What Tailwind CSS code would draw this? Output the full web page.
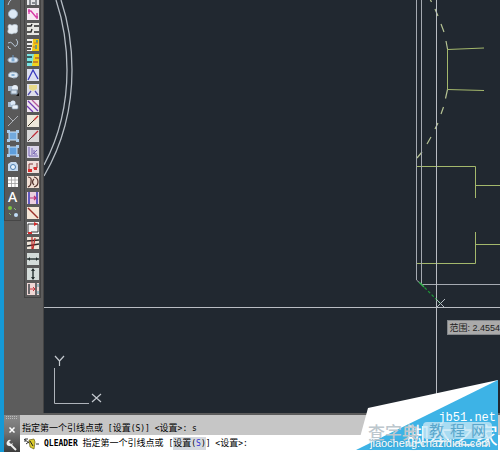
<!DOCTYPE html>
<html lang="zh-CN">
<head>
<meta charset="utf-8">
<title>CAD</title>
<script src="https://cdn.jsdelivr.net/npm/@tailwindcss/browser@4"></script>
</head>
<body class="bg-[#5c5c5c] font-['Noto_Sans','Noto_Sans_CJK_SC',sans-serif]">
<main class="relative flex h-screen flex-col overflow-hidden border-l-4 border-[#1599d6]">
  <div class="flex min-h-0 flex-1">
    <aside class="flex w-10 shrink-0 items-start gap-[3px] border-r border-[#444] bg-[#5c5c5c]">
      <nav aria-label="绘图" class="-mt-[9px] grid h-[230px] w-[17px] shrink-0 auto-rows-fr justify-items-center items-center border-x border-b border-[#464646] bg-[#595959]">
        <button aria-label="圆弧"><svg class="size-3" viewBox="0 0 12 12"><path d="M1 12Q3 5 8 6" fill="none" stroke="#b9c7d8"/></svg></button>
        <button aria-label="圆"><svg class="size-3" viewBox="0 0 12 12"><circle cx="6" cy="6" r="4.5" fill="#dde9f5" stroke="#a4b5c8"/></svg></button>
        <button aria-label="修订云线"><svg class="size-3" viewBox="0 0 12 12"><path d="M3 1.500Q5 3 7 1.500Q11 1 10.500 4Q10 6 10.500 8Q10 11 7 10Q5 11.500 3 10.500Q0 10 1 7.500Q2 6 1 4Q1 1 3 1.500" fill="#e6edf3" stroke="#bac8d6" stroke-width=".7"/></svg></button>
        <button aria-label="样条曲线"><svg class="size-3" viewBox="0 0 12 12"><path d="M1 5Q4 3 6 6Q8 10 10 7Q12 4 9 1M1 8Q1 11 4 11" fill="none" stroke="#b7c7d7"/></svg></button>
        <button aria-label="椭圆"><svg class="size-3" viewBox="0 0 12 12"><ellipse cx="6" cy="6" rx="5" ry="2.500" fill="#dce8f3" stroke="#9aabc0"/><path d="M6 1v6" stroke="#6d9cc8"/><path d="M4.500 4.500h3v3h-3z" fill="#7eaad2"/></svg></button>
        <button aria-label="椭圆弧"><svg class="size-3" viewBox="0 0 12 12"><path d="M2 8Q0 4 5 3Q11 3 11 6Q11 9 6 9" fill="#dce8f3" stroke="#9bafc2"/><path d="M4.500 5h3v2h-3z" fill="#86afd2"/></svg></button>
        <button aria-label="插入块"><svg class="size-3" viewBox="0 0 12 12"><path d="M1 2h6v5H1z" fill="#aebfd1"/><circle cx="8" cy="4" r="3" fill="#e8f0f8"/><path d="M4 6h6v4H4z" fill="#d3dfeb" stroke="#8396aa"/><path d="M9 12h3V9z" fill="#111"/></svg></button>
        <button aria-label="创建块"><svg class="size-3" viewBox="0 0 12 12"><path d="M1 3h7v5H1z" fill="#a9bdd2"/><circle cx="6" cy="4" r="2.5" fill="#dce9f7"/><rect x="5" y="6" width="6" height="4" rx="1" fill="#eaf1f8" stroke="#889db4" stroke-width=".7"/></svg></button>
        <button aria-label="点"><svg class="size-3" viewBox="0 0 12 12"><path d="M1 1l5 5M1 11L11 1" fill="none" stroke="#aeb2b8"/></svg></button>
        <button aria-label="图案填充"><svg class="size-3" viewBox="0 0 12 12"><path d="M2 2h8v8H2z" fill="#72a9dc" stroke="#d4e8fa"/><path d="M0 0h3v3H0zM9 0h3v3H9zM0 9h3v3H0zM9 9h3v3H9z" fill="#a9ccec"/></svg></button>
        <button aria-label="渐变色"><svg class="size-3" viewBox="0 0 12 12"><path d="M2 2h8v8H2z" fill="#5f9fdc" stroke="#c4e0fa"/><path d="M0 0h3v3H0zM9 0h3v3H9zM0 9h3v3H0zM9 9h3v3H9z" fill="#a9ccec"/></svg></button>
        <button aria-label="面域"><svg class="size-3" viewBox="0 0 12 12"><path d="M1 3l3-2h5l2 3v6H1z" fill="#c6daee"/><circle cx="6" cy="6" r="2.5" fill="#e8f3fc" stroke="#4b7faf"/></svg></button>
        <button aria-label="表格"><svg class="size-3" viewBox="0 0 12 12"><path d="M1 1h10v10H1z" fill="#fff"/><path d="M1 4h10M1 7.500h10M4.500 1v10M8 1v10" stroke="#9c9c9c" stroke-width=".8"/></svg></button>
        <button aria-label="多行文字" class="text-[14px] leading-3 font-medium text-white">A</button>
        <button aria-label="添加选定对象"><svg class="size-3" viewBox="0 0 12 12"><circle cx="3" cy="2" r="2" fill="#7ec440"/><circle cx="9" cy="9" r="2" fill="#c3def8"/><path d="M7 2l2 2M2 7l2 2" stroke="#8db879"/></svg></button>
      </nav>
      <nav aria-label="工具" class="-mt-[9px] grid h-[307px] w-[17px] shrink-0 auto-rows-fr justify-items-center items-center border-x border-b border-[#444] bg-[#595959]">
        <button aria-label="工具 1"><svg class="size-3" viewBox="0 0 12 12"><path fill="#e5e6e8" d="M0 0h12v12H0z"/><path d="M3 3v9M9 3v9M5 10h3" stroke="#6b7177" stroke-width="1.500"/></svg></button>
        <button aria-label="工具 2"><svg class="size-3" viewBox="0 0 12 12"><path fill="#f6e9f3" d="M0 0h12v12H0z"/><path d="M2 1v5M1 3h3l5 6h2M10 5v6" fill="none" stroke="#d638a5" stroke-width="1.300"/></svg></button>
        <button aria-label="工具 3"><svg class="size-3" viewBox="0 0 12 12"><path fill="#e7e7e2" d="M0 0h12v12H0z"/><path d="M0 3h4l1-2M7 3h5M0 9h4l1-3M7 9h5" fill="none" stroke="#292929" stroke-width="1.400"/></svg></button>
        <button aria-label="工具 4"><svg class="size-3" viewBox="0 0 12 12"><path fill="#eee" d="M0 0h12v12H0z"/><path fill="#efc916" d="M6 0h6v12H5z"/><path d="M0 3h5M0 7h5M0 10h4" stroke="#222" stroke-width="1.500"/><path d="M10 1v3M9 6v4" stroke="#61a37c" stroke-width="2"/><path d="M7 4h4M6 8h3" stroke="#d97824"/></svg></button>
        <button aria-label="工具 5"><svg class="size-3" viewBox="0 0 12 12"><path fill="#79e4e4" d="M0 0h7v12H0z"/><path fill="#f0d21c" d="M7 0h5v12H5z"/><path d="M0 3h5M0 8h5" stroke="#263837" stroke-width="1.500"/><path d="M8 4h4M6 8h5" stroke="#bd6d25" stroke-width="1.500"/></svg></button>
        <button aria-label="工具 6"><svg class="size-3" viewBox="0 0 12 12"><path fill="#dcdff0" d="M0 0h12v12H0z"/><path d="M1 11L6 1l5 9" fill="none" stroke="#3939bd" stroke-width="1.300"/></svg></button>
        <button aria-label="工具 7"><svg class="size-3" viewBox="0 0 12 12"><path fill="#dedfea" d="M0 0h12v12H0z"/><path d="M2 1h8v4l-4 2l-4-2z" fill="#e7d98a"/><path d="M1 11l3-4M11 11L8 7" stroke="#5552ae" stroke-width="1.300"/></svg></button>
        <button aria-label="工具 8"><svg class="size-3" viewBox="0 0 12 12"><path fill="#efe5ef" d="M0 0h12v12H0z"/><path d="M1 1l10 10M0 6l6 6" stroke="#713ab4" stroke-width="1.300"/><path d="M5 0l7 7" stroke="#b45a9a" stroke-width="1.300"/></svg></button>
        <button aria-label="工具 9"><svg class="size-3" viewBox="0 0 12 12"><path fill="#eee9dc" d="M0 0h12v12H0z"/><path d="M1 11L8 4" stroke="#393020"/><path d="M7 5l4-4" stroke="#d52b2b" stroke-width="1.300"/></svg></button>
        <button aria-label="工具 10"><svg class="size-3" viewBox="0 0 12 12"><path fill="#d8d8d8" d="M0 0h12v12H0z"/><path d="M1 11L8 4" stroke="#574242"/><path d="M5 7l6-6" stroke="#c02b37" stroke-width="1.300"/></svg></button>
        <button aria-label="工具 11"><svg class="size-3" viewBox="0 0 12 12"><path fill="#d9d4e7" d="M0 0h12v12H0z"/><path d="M2 1v9h9M5 2v7M6 8l4-4M7 4v4h3" fill="none" stroke="#7765b4"/></svg></button>
        <button aria-label="工具 12"><svg class="size-3" viewBox="0 0 12 12"><path fill="#efdfdb" d="M0 0h12v12H0z"/><path d="M2 9V3h4M6 7h4V2" fill="none" stroke="#803b3b"/><path d="M1 8h4v3H1zM7 6h3v3H7z" fill="#d83030"/></svg></button>
        <button aria-label="工具 13"><svg class="size-3" viewBox="0 0 12 12"><path fill="#f0dfd4" d="M0 0h12v12H0z"/><path d="M1 1q4 0 3 5q0 4-3 5M7 1q4 1 4 5q0 4-4 5M7 3Q4 6 7 9" fill="none" stroke="#53322d" stroke-width="1.200"/></svg></button>
        <button aria-label="工具 14"><svg class="size-3" viewBox="0 0 12 12"><path fill="#eacfdf" d="M0 0h12v12H0z"/><path d="M2 0v12M10 0v12" stroke="#3535b7" stroke-width="1.500"/><path d="M3 6h6M7 4l2 2l-2 2" fill="none" stroke="#bd3279" stroke-width="1.200"/></svg></button>
        <button aria-label="工具 15"><svg class="size-3" viewBox="0 0 12 12"><path fill="#f4e7d8" d="M0 0h12v12H0z"/><path d="M1 1l10 10" stroke="#9b3029" stroke-width="1.400"/></svg></button>
        <button aria-label="工具 16"><svg class="size-3" viewBox="0 0 12 12"><path fill="#f1f1f3" d="M0 0h12v12H0z"/><path d="M1 11V2h10v8H4" fill="none" stroke="#383838"/><path d="M7 0l4 2l-4 2zM1 10h4v2H1z" fill="#d32b2b"/></svg></button>
        <button aria-label="工具 17"><svg class="size-3" viewBox="0 0 12 12"><path fill="#eee5d9" d="M0 0h12v12H0z"/><path d="M0 4l12-1M0 9l12-2" stroke="#2b2929" stroke-width="1.400"/><path d="M5 0v12M8 1L6 12" stroke="#bf2929" stroke-width="1.200"/></svg></button>
        <button aria-label="工具 18"><svg class="size-3" viewBox="0 0 12 12"><path fill="#d4dcda" d="M0 0h12v12H0z"/><path d="M0 6h12" stroke="#263030" stroke-width="1.400"/><path d="M1 6l2-2v4zM11 6L9 4v4z" fill="#263030"/></svg></button>
        <button aria-label="工具 19"><svg class="size-3" viewBox="0 0 12 12"><path fill="#d4dcda" d="M0 0h12v12H0z"/><path d="M6 1v10" stroke="#263030" stroke-width="1.400"/><path d="M6 0L4 3h4zM6 12L4 9h4z" fill="#263030"/></svg></button>
        <button aria-label="工具 20"><svg class="size-3" viewBox="0 0 12 12"><path fill="#efd7d5" d="M0 0h12v12H0z"/><path d="M2 1v10M9 0v12" stroke="#222b31" stroke-width="1.300"/><path d="M3 6h5M6 4l2 2l-2 2" fill="none" stroke="#c7343c"/><path d="M11 1v3M11 8v3" stroke="#4b9cac"/></svg></button>
      </nav>
    </aside>

    <section aria-label="绘图区" class="relative min-w-0 flex-1 overflow-hidden bg-[#212830]">
      <svg class="block h-full w-full" viewBox="44 0 456 413" preserveAspectRatio="xMinYMin slice" fill="none">
        <g stroke="#b5bcc3" stroke-width="1.300">
          <path d="M56 0Q67 33 67 70Q67 122 44 165"/>
          <path d="M61 0Q72 33 72 70Q72 128 44 176"/>
        </g>
        <g stroke="#a4b86c">
          <path d="M447.500 49V89.500M447.500 49.500L484 48M447.500 89.500L484 90.500"/>
          <path d="M416.500 166.500H475.500V198M475.500 185.500H500M475.500 232V263.500H416.500M475.500 244.500H500"/>
          <path d="M430 -1l1.500 3M435 9l3 7M441 24l3 8M446 41l1.500 8M447.500 89.500l-2 9M443.500 107l-2.500 7M438 123l-3 6M431 137l-4 7M422 152l-5 6" stroke="#b6c394" stroke-width="1.200"/>
        </g>
        <g stroke="#a5aab1">
          <path d="M416.500 0V280l5 4.500H500M421.500 0V284"/>
          <path stroke="#b9bdc3" d="M436.500 0V413M44 307.500H500"/>
        </g>
        <path d="M421 284L440 303" stroke="#1d9a38" stroke-width="1.200" stroke-dasharray="3 2"/>
        <path d="M419 282l5 5" stroke="#33b04a" stroke-width="1.200"/>
        <path d="M436 299l9 9M445 299l-9 9" stroke="#b5bcc3"/>
        <path d="M54.500 368V403.500H89" stroke="#aeb3ba"/>
        <path d="M55 356l4.500 5l4.500-5M59.500 361v5M92 394l9 8M101 394l-9 8" stroke="#c3c8ce" stroke-width="1.200"/>
      </svg>
      <output class="absolute top-[320px] right-0 flex h-[15px] items-center border-y border-l border-[#82868a] bg-[#aaa] pl-px font-['Liberation_Sans','Noto_Sans_CJK_SC',sans-serif] text-[9px] leading-3 whitespace-nowrap text-[#222]">范围: 2.4554</output>
    </section>
  </div>

  <section aria-label="命令行" class="mt-0.5 flex shrink-0">
    <div class="flex w-4 shrink-0 flex-col items-center justify-between bg-linear-to-b from-[#8a8a8a] via-[#707070] to-[#3c3c3c] pt-px pb-px">
      <svg class="h-1 w-3" viewBox="0 0 12 4"><path d="M0 .5h12M0 2.500h12" stroke="#bbb" stroke-dasharray="1 1"/></svg>
      <button aria-label="关闭"><svg class="size-2" viewBox="0 0 8 8"><path d="M1.500 1.500l5 5M6.500 1.500l-5 5" stroke="#fff" stroke-width="1.500"/></svg></button>
      <button aria-label="自定义"><svg class="size-3" viewBox="0 0 12 12"><path d="M5 6l5 5" stroke="#eee" stroke-width="2"/><path d="M5 1L3 3l2 2l2-1a3.500 3.500 0 0 1-6 2A3.500 3.500 0 0 1 5 1" fill="#eee"/></svg></button>
    </div>
    <div class="flex min-w-0 flex-1 flex-col font-['DejaVu_Sans_Mono','Noto_Sans_CJK_SC',monospace] text-[8px] whitespace-pre text-black">
      <p class="flex h-5 items-end bg-[#c6c6c6] px-0.5"><span class="leading-3"><span class="text-[9px]">指定第一个引线点或</span> [<span class="text-[9px]">设置</span>(S)] &lt;<span class="text-[9px]">设置</span>&gt;: s</span></p>
      <p class="flex h-[17px] items-center bg-white px-1 leading-4">
        <svg class="mr-1 h-3 w-4 shrink-0" viewBox="0 0 16 12"><path d="M0 1l5 4M1 1v3M1 1h3M2 6l4-3h3M12 6h3" stroke="#333" fill="none"/><path d="M5 2l5-1l1 3l-1 7l-4-2z" fill="#dccb2d" stroke="#696014" stroke-width=".7"/><path d="M6 3l3 5" stroke="#222"/></svg><span class="font-bold">QLEADER</span><span> <span class="text-[9px]">指定第一个引线点或</span> [</span><button class="bg-[#d5d8de] leading-3"><span class="text-[9px]">设置</span>(<span class="text-[#3030d0]">S</span>)</button><span>] &lt;<span class="text-[9px]">设置</span>&gt;:</span>
      </p>
    </div>
  </section>

  <div class="absolute right-0 bottom-0 h-[73px] w-[144px] font-['Noto_Sans_CJK_SC',sans-serif] whitespace-nowrap">
    <svg class="block h-full w-full" viewBox="0 0 144 73"><path d="M12 29L142 1V73H0z" fill="#fff"/><path d="M0 71L142 1V71z" fill="#3db3e6"/></svg>
    <span class="absolute right-1 top-[33px] font-['Liberation_Mono',monospace] text-[12px] leading-3 text-white">jb51.net</span>
    <span class="absolute right-0.5 top-[43px] text-[23px] leading-6 text-white">脚本之家</span>
    <span class="absolute left-3 top-[43px] text-[17px] leading-5 font-medium text-[#bdc7cd]">查字典</span>
    <span class="absolute left-[67px] top-[43px] flex h-[17px] w-[69px] items-center justify-center gap-1.5 rounded-sm bg-[#c4e6f5]/80 text-[15px] text-[#5aa6cb]"><span>教</span><span>程</span><span>网</span></span>
    <span class="absolute left-3.5 top-[58px] font-['Liberation_Sans',sans-serif] text-[11px] leading-3 text-white [text-shadow:0_0_2px_#3b8fb5]">jiaocheng.chazidian.com</span>
  </div>
</main>
</body>
</html>
